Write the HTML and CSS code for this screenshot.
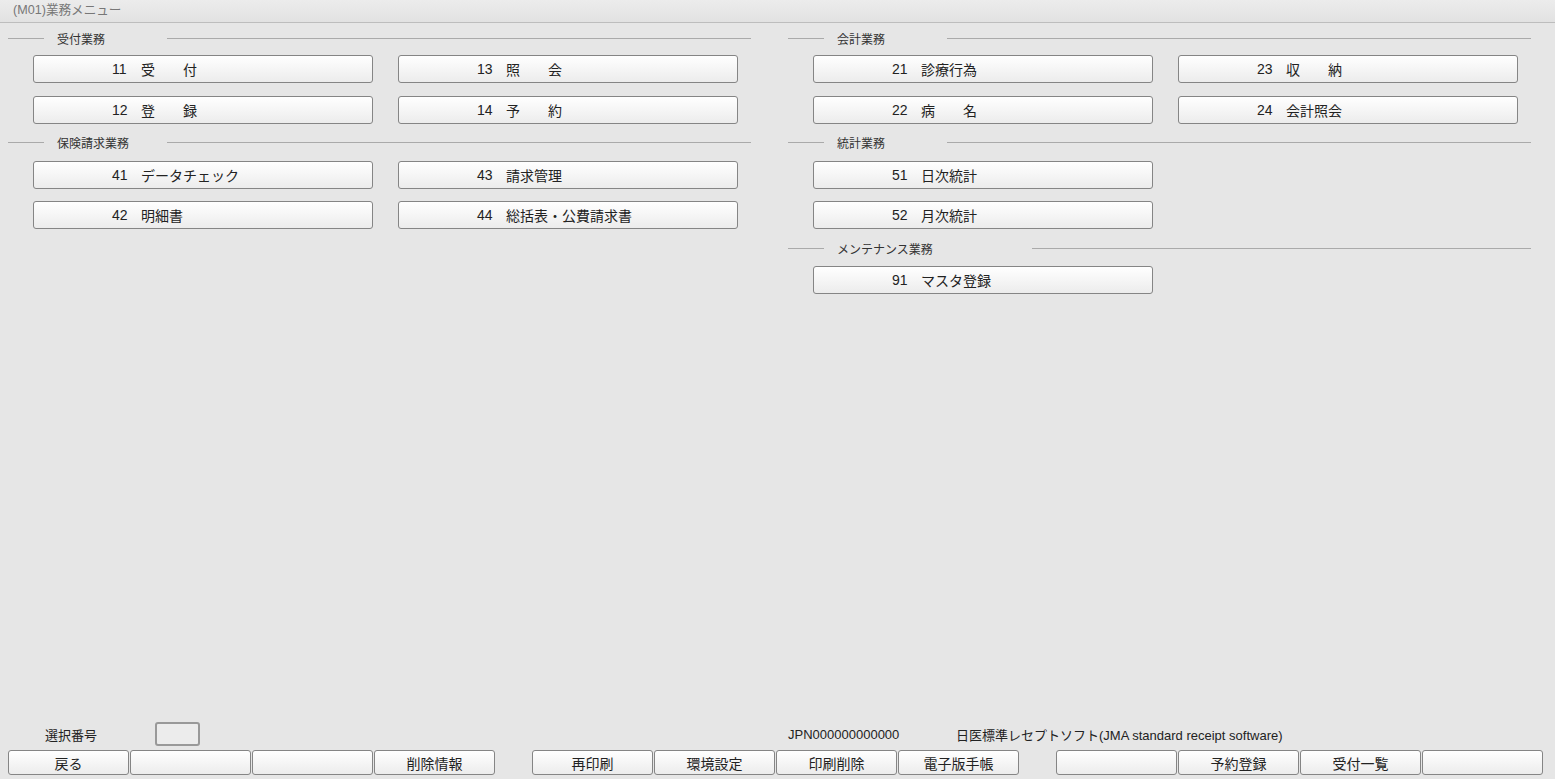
FILE: index.html
```html
<!DOCTYPE html>
<html lang="ja">
<head>
<meta charset="utf-8">
<title>(M01)業務メニュー</title>
<link rel="stylesheet" href="styles.css">
</head>
<body>
<div class="titlebar">(M01)業務メニュー</div>
<main class="main">
  <div class="col">
    <section class="section">
      <div class="legend"><span class="legend-text">受付業務</span></div>
      <div class="grid">
        <button class="mbtn"><span class="num">11</span><span>受　　付</span></button>
        <button class="mbtn"><span class="num">13</span><span>照　　会</span></button>
        <button class="mbtn"><span class="num">12</span><span>登　　録</span></button>
        <button class="mbtn"><span class="num">14</span><span>予　　約</span></button>
      </div>
    </section>
    <section class="section">
      <div class="legend"><span class="legend-text">保険請求業務</span></div>
      <div class="grid">
        <button class="mbtn"><span class="num">41</span><span>データチェック</span></button>
        <button class="mbtn"><span class="num">43</span><span>請求管理</span></button>
        <button class="mbtn"><span class="num">42</span><span>明細書</span></button>
        <button class="mbtn"><span class="num">44</span><span>総括表・公費請求書</span></button>
      </div>
    </section>
  </div>
  <div class="col">
    <section class="section">
      <div class="legend"><span class="legend-text">会計業務</span></div>
      <div class="grid">
        <button class="mbtn"><span class="num">21</span><span>診療行為</span></button>
        <button class="mbtn"><span class="num">23</span><span>収　　納</span></button>
        <button class="mbtn"><span class="num">22</span><span>病　　名</span></button>
        <button class="mbtn"><span class="num">24</span><span>会計照会</span></button>
      </div>
    </section>
    <section class="section">
      <div class="legend"><span class="legend-text">統計業務</span></div>
      <div class="grid">
        <button class="mbtn"><span class="num">51</span><span>日次統計</span></button>
        <span class="empty"></span>
        <button class="mbtn"><span class="num">52</span><span>月次統計</span></button>
      </div>
    </section>
    <section class="section">
      <div class="legend"><span class="legend-text legend-wide">メンテナンス業務</span></div>
      <div class="grid">
        <button class="mbtn"><span class="num">91</span><span>マスタ登録</span></button>
      </div>
    </section>
  </div>
</main>
<footer class="footer">
  <div class="info">
    <div class="info-left">
      <span class="sel-label">選択番号</span>
      <input class="sel-input" type="text">
    </div>
    <div class="info-right">
      <span class="jpn">JPN000000000000</span>
      <span class="soft">日医標準レセプトソフト(JMA standard receipt software)</span>
    </div>
  </div>
  <div class="fkeys">
    <div class="fgroup">
      <button class="fkey">戻る</button>
      <button class="fkey"></button>
      <button class="fkey"></button>
      <button class="fkey">削除情報</button>
    </div>
    <div class="fgroup">
      <button class="fkey">再印刷</button>
      <button class="fkey">環境設定</button>
      <button class="fkey">印刷削除</button>
      <button class="fkey">電子版手帳</button>
    </div>
    <div class="fgroup">
      <button class="fkey"></button>
      <button class="fkey">予約登録</button>
      <button class="fkey">受付一覧</button>
      <button class="fkey"></button>
    </div>
  </div>
</footer>
</body>
</html>
```

FILE: styles.css
```css
* { box-sizing: border-box; }
html, body {
  margin: 0;
  padding: 0;
  height: 100%;
}
body {
  background: #e6e6e6;
  font-family: "Liberation Sans", "Noto Sans CJK JP", sans-serif;
  color: #222;
  display: flex;
  flex-direction: column;
  height: 779px;
  overflow: hidden;
}
.titlebar {
  height: 23px;
  line-height: 20px;
  padding-left: 13px;
  font-size: 12.6px;
  color: #777;
  background: linear-gradient(to bottom, #ececec, #e2e2e2);
  border-bottom: 1px solid #bdbdbd;
  flex: none;
}
.main {
  flex: 1;
  display: grid;
  grid-template-columns: 743px 743px;
  column-gap: 37px;
  padding: 5px 0 0 8px;
  align-content: start;
  align-items: start;
}
.col {
  display: flex;
  flex-direction: column;
  gap: 9px;
}
.legend {
  display: flex;
  align-items: center;
  height: 20px;
  font-size: 12px;
  color: #333;
}
.legend::before {
  content: "";
  width: 36px;
  border-top: 1px solid #aaa;
  margin-right: 13px;
}
.legend::after {
  content: "";
  flex: 1;
  border-top: 1px solid #aaa;
}
.legend-text {
  width: 110px;
}
.legend-wide {
  width: 195px;
}
.grid {
  display: grid;
  grid-template-columns: 340px 340px;
  column-gap: 25px;
  row-gap: 12.5px;
  margin: 7px 0 0 25px;
}
.section + .section .grid {
  margin-top: 8px;
}
.mbtn {
  height: 28px;
  display: flex;
  align-items: center;
  padding: 0 0 0 78px;
  font-family: inherit;
  font-size: 14px;
  color: #222;
  text-align: left;
  border: 1px solid #858585;
  border-radius: 3px;
  background: linear-gradient(to bottom, #ffffff, #ececec);
}
.num {
  width: 29px;
  flex: none;
}
.footer {
  flex: none;
  padding: 0 0 4px 8px;
}
.info {
  display: grid;
  grid-template-columns: 743px 743px;
  column-gap: 37px;
  height: 24px;
  align-items: center;
  font-size: 13px;
  color: #222;
}
.info-left {
  display: flex;
  align-items: center;
  padding-left: 37px;
}
.sel-label {
  width: 110px;
}
.sel-input {
  width: 45px;
  height: 24px;
  border: 2px solid #999;
  border-radius: 3px;
  background: #ececec;
  padding: 0;
}
.info-right {
  display: flex;
  align-items: center;
}
.jpn {
  width: 168px;
}
.fkeys {
  display: flex;
  gap: 37px;
  margin-top: 4px;
}
.fgroup {
  display: flex;
  gap: 1px;
}
.fkey {
  width: 121px;
  height: 25px;
  padding: 0;
  font-family: inherit;
  font-size: 14px;
  color: #222;
  border: 1px solid #858585;
  border-radius: 3px;
  background: linear-gradient(to bottom, #ffffff, #ececec);
}
```
